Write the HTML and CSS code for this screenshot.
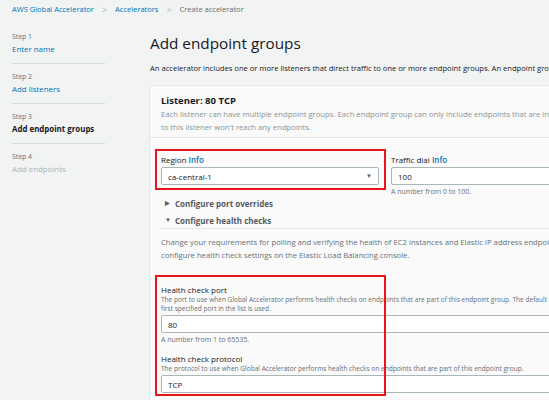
FILE: index.html
```html
<!DOCTYPE html>
<html>
<head>
<meta charset="utf-8">
<link rel="stylesheet" href="styles.css">
</head>
<body>
<header class="crumbs">
  <a class="crumb-link">AWS Global Accelerator</a>
  <span class="sep">&gt;</span>
  <a class="crumb-link">Accelerators</a>
  <span class="sep">&gt;</span>
  <span class="crumb-current">Create accelerator</span>
</header>
<div class="layout">
  <nav class="steps">
    <div class="step"><div class="step-num">Step 1</div><div class="step-name link">Enter name</div></div>
    <div class="step"><div class="step-num">Step 2</div><div class="step-name link">Add listeners</div></div>
    <div class="step"><div class="step-num">Step 3</div><div class="step-name current">Add endpoint groups</div></div>
    <div class="step last"><div class="step-num">Step 4</div><div class="step-name disabled">Add endpoints</div></div>
  </nav>
  <main class="content">
    <h1 class="title">Add endpoint groups</h1>
    <p class="lead">An accelerator includes one or more listeners that direct traffic to one or more endpoint groups. An endpoint group includes endpoints, such as load balancers.</p>
    <section class="card">
      <div class="card-head">
        <h2 class="card-title">Listener: 80 TCP</h2>
        <p class="card-sub">Each listener can have multiple endpoint groups. Each endpoint group can only include endpoints that are in one Region. If you don't add an endpoint group, traffic<br>to this listener won't reach any endpoints.</p>
      </div>
      <div class="card-body">
        <div class="row">
          <div class="field region">
            <div class="label">Region <span class="info">Info</span></div>
            <div class="input select"><span>ca-central-1</span><span class="caret">&#9660;</span></div>
          </div>
          <div class="field dial">
            <div class="label">Traffic dial <span class="info">Info</span></div>
            <div class="input">100</div>
            <div class="hint">A number from 0 to 100.</div>
          </div>
        </div>
        <div class="expanders">
          <div class="expander"><span class="tri">&#9654;</span>Configure port overrides</div>
          <div class="expander"><span class="tri">&#9660;</span>Configure health checks</div>
        </div>
        <p class="section-desc">Change your requirements for polling and verifying the health of EC2 instances and Elastic IP address endpoints. For Application Load Balancer and Network Load Balancer endpoints, you<br>configure health check settings on the Elastic Load Balancing console.</p>
        <div class="field wide first">
          <div class="label">Health check port</div>
          <div class="desc">The port to use when Global Accelerator performs health checks on endpoints that are part of this endpoint group. The default is the listener port. If the listener has multiple ports, the<br>first specified port in the list is used.</div>
          <div class="input">80</div>
          <div class="hint">A number from 1 to 65535.</div>
        </div>
        <div class="field wide second">
          <div class="label">Health check protocol</div>
          <div class="desc">The protocol to use when Global Accelerator performs health checks on endpoints that are part of this endpoint group.</div>
          <div class="input">TCP</div>
        </div>
      </div>
      <div class="mark mark-region"></div>
      <div class="mark mark-health"></div>
    </section>
  </main>
</div>
</body>
</html>
```
FILE: styles.css
```css
* { box-sizing: border-box; margin: 0; padding: 0; }
html, body { background: #f2f3f3; }
body {
  width: 549px;
  height: 400px;
  overflow: hidden;
  font-family: "Open Sans", "Liberation Sans", sans-serif;
  color: #16191f;
}
.crumbs {
  height: 18px;
  padding-left: 12px;
  display: flex;
  align-items: center;
  gap: 8px;
  font-size: 7.5px;
  white-space: nowrap;
}
.crumb-link { color: #0073bb; }
.sep { color: #aab7b8; font-size: 9px; }
.crumb-current { color: #687078; }
.layout { display: flex; }
.steps {
  width: 93px;
  margin-left: 12px;
  padding-top: 6px;
  flex: none;
}
.step {
  padding: 7px 0 8px;
  border-bottom: 1px solid #d5dbdb;
}
.step.last { border-bottom: none; }
.step-num { font-size: 6.8px; line-height: 12px; color: #687078; }
.step-name { font-size: 7.9px; line-height: 12px; white-space: nowrap; }
.link { color: #0073bb; }
.current { font-weight: 700; color: #16191f; }
.disabled { color: #aab7b8; }
.content {
  margin-left: 45px;
  flex: none;
  width: 900px;
}
.title {
  margin-top: 14px;
  font-size: 15.3px;
  line-height: 22px;
  font-weight: 400;
  color: #16191f;
}
.lead {
  margin-top: 8px;
  font-size: 7.6px;
  line-height: 12px;
  white-space: nowrap;
}
.card {
  position: relative;
  margin-top: 11px;
  margin-left: -1px;
  background: #fafafa;
  border: 1px solid #e4e7e7;
}
.card-head {
  padding: 8px 11px 3px;
  border-bottom: 1px solid #e4e7e7;
}
.card-title { font-size: 9.5px; line-height: 14px; font-weight: 700; }
.card-sub { font-size: 7.7px; line-height: 13px; color: #879596; white-space: nowrap; }
.card-body { padding: 16px 11px 20px; }
.row { display: flex; gap: 12px; align-items: flex-start; }
.field.region { width: 218px; }
.field.dial { flex: 1; }
.label { font-size: 8px; line-height: 12px; }
.info { color: #0073bb; font-weight: 600; }
.input {
  margin-top: 1px;
  height: 18px;
  border: 1px solid #aab7b8;
  border-radius: 2px;
  background: #fff;
  padding: 0 6px;
  display: flex;
  align-items: center;
  font-size: 8px;
}
.select { justify-content: space-between; }
.caret { font-size: 6px; color: #545b64; }
.hint { margin-top: 2px; font-size: 7px; line-height: 10px; color: #687078; }
.expanders {
  padding-left: 4px;
  padding-bottom: 2px;
  border-bottom: 1px solid #e4e7e7;
}
.expander {
  display: flex;
  align-items: center;
  height: 12px;
  margin-bottom: 5px;
  font-size: 8px;
  font-weight: 700;
  color: #545b64;
}
.expander:last-child { margin-bottom: 0; }
.tri { font-size: 6px; width: 10px; }
.section-desc {
  margin-top: 7px;
  font-size: 7.7px;
  line-height: 13px;
  color: #687078;
  white-space: nowrap;
}
.field.wide .label { line-height: 10px; }
.field.wide .desc { font-size: 6.55px; line-height: 9px; color: #687078; white-space: nowrap; }
.field.wide .input { margin-top: 2px; }
.field.first { margin-top: 23px; }
.field.second { margin-top: 9px; }
.mark {
  position: absolute;
  left: 5px;
  width: 231px;
  border: 2px solid #e8151c;
}
.mark-region { top: 63px; height: 41px; }
.mark-health { top: 189px; height: 121px; }
```
